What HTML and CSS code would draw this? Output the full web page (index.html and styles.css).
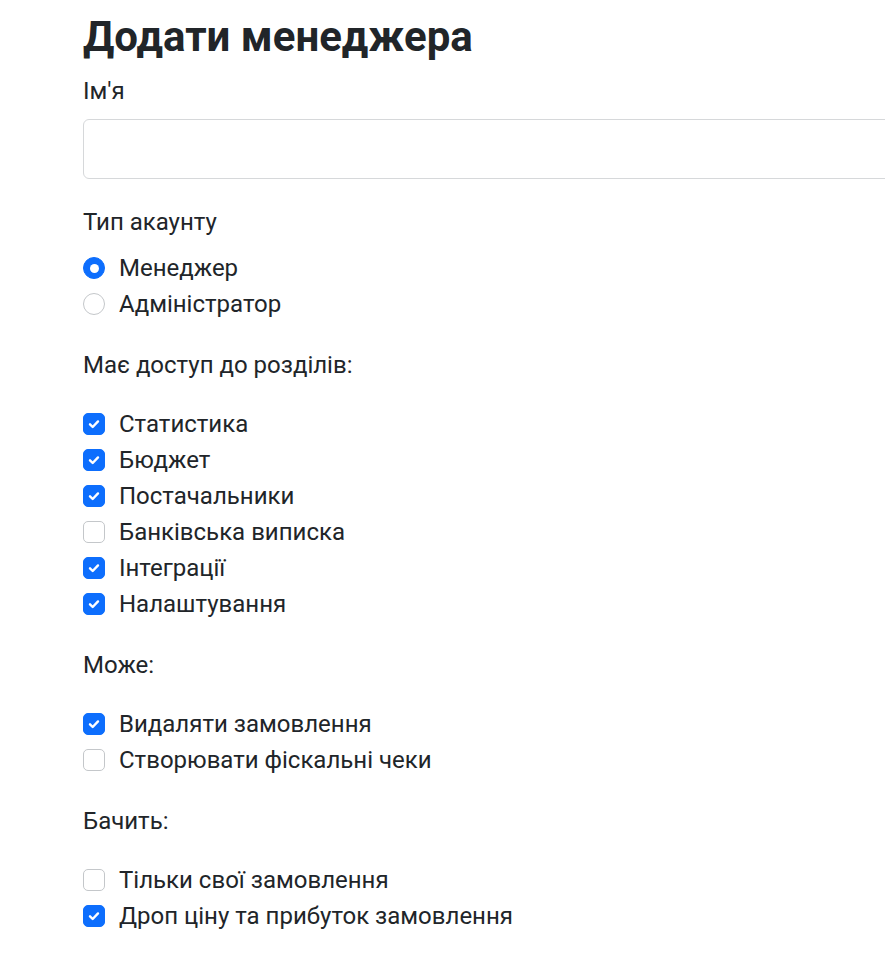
FILE: index.html
```html
<!DOCTYPE html>
<html lang="uk">
<head>
<meta charset="utf-8">
<title>Додати менеджера</title>
<link rel="stylesheet" href="styles.css">
</head>
<body>
<main class="page">
  <h1 class="title">Додати менеджера</h1>
  <form class="form">
    <label class="field-label" for="name">Ім'я</label>
    <input class="text-input" id="name" type="text">

    <div class="group">
      <div class="group-label group-label--tight">Тип акаунту</div>
      <label class="row"><span class="radio radio--on"></span><span>Менеджер</span></label>
      <label class="row"><span class="radio"></span><span>Адміністратор</span></label>
    </div>

    <div class="group">
      <div class="group-label">Має доступ до розділів:</div>
      <label class="row"><span class="check check--on"><svg viewBox="0 0 20 20"><path d="M6 10.3l2.7 2.7 5.3-5.6"/></svg></span><span>Статистика</span></label>
      <label class="row"><span class="check check--on"><svg viewBox="0 0 20 20"><path d="M6 10.3l2.7 2.7 5.3-5.6"/></svg></span><span>Бюджет</span></label>
      <label class="row"><span class="check check--on"><svg viewBox="0 0 20 20"><path d="M6 10.3l2.7 2.7 5.3-5.6"/></svg></span><span>Постачальники</span></label>
      <label class="row"><span class="check"></span><span>Банківська виписка</span></label>
      <label class="row"><span class="check check--on"><svg viewBox="0 0 20 20"><path d="M6 10.3l2.7 2.7 5.3-5.6"/></svg></span><span>Інтеграції</span></label>
      <label class="row"><span class="check check--on"><svg viewBox="0 0 20 20"><path d="M6 10.3l2.7 2.7 5.3-5.6"/></svg></span><span>Налаштування</span></label>
    </div>

    <div class="group">
      <div class="group-label">Може:</div>
      <label class="row"><span class="check check--on"><svg viewBox="0 0 20 20"><path d="M6 10.3l2.7 2.7 5.3-5.6"/></svg></span><span>Видаляти замовлення</span></label>
      <label class="row"><span class="check"></span><span>Створювати фіскальні чеки</span></label>
    </div>

    <div class="group">
      <div class="group-label">Бачить:</div>
      <label class="row"><span class="check"></span><span>Тільки свої замовлення</span></label>
      <label class="row"><span class="check check--on"><svg viewBox="0 0 20 20"><path d="M6 10.3l2.7 2.7 5.3-5.6"/></svg></span><span>Дроп ціну та прибуток замовлення</span></label>
    </div>
  </form>
</main>
</body>
</html>
```

FILE: styles.css
```css
html, body {
  margin: 0;
  padding: 0;
  background: #fff;
  overflow: hidden;
}
body {
  font-family: Roboto, "Noto Sans", sans-serif;
  color: #212529;
  font-size: 24px;
  line-height: 36px;
}
.page {
  padding: 12px 0 0 83px;
}
.title {
  margin: 0;
  font-size: 42px;
  line-height: 50px;
  font-weight: 700;
  color: #212529;
}
.form {
  display: flex;
  flex-direction: column;
  margin-top: 11px;
}
.field-label {
  display: block;
  margin-bottom: 10px;
}
.text-input {
  box-sizing: border-box;
  width: 900px;
  height: 60px;
  border: 1px solid #d6d8da;
  border-radius: 6px;
  background: #fff;
  font: inherit;
  padding: 0 16px;
  margin: 0 0 25px 0;
  outline: none;
}
.group {
  display: flex;
  flex-direction: column;
  margin-bottom: 25px;
}
.group-label {
  margin-bottom: 23px;
}
.group-label--tight {
  margin-bottom: 10px;
}
.row {
  display: flex;
  align-items: center;
  height: 36px;
}
.check, .radio {
  box-sizing: border-box;
  flex: 0 0 auto;
  width: 22px;
  height: 22px;
  margin-right: 14px;
  border: 1px solid #c4c7ca;
  background: #fff;
  display: flex;
  align-items: center;
  justify-content: center;
}
.check {
  border-radius: 5px;
}
.check--on {
  background: #0d6efd;
  border-color: #0d6efd;
}
.check svg {
  width: 20px;
  height: 20px;
  fill: none;
  stroke: #fff;
  stroke-width: 2.4;
  stroke-linecap: round;
  stroke-linejoin: round;
}
.radio {
  border-radius: 50%;
}
.radio--on {
  background: #0d6efd;
  border-color: #0d6efd;
}
.radio--on::after {
  content: "";
  width: 9px;
  height: 9px;
  border-radius: 50%;
  background: #fff;
}
```
